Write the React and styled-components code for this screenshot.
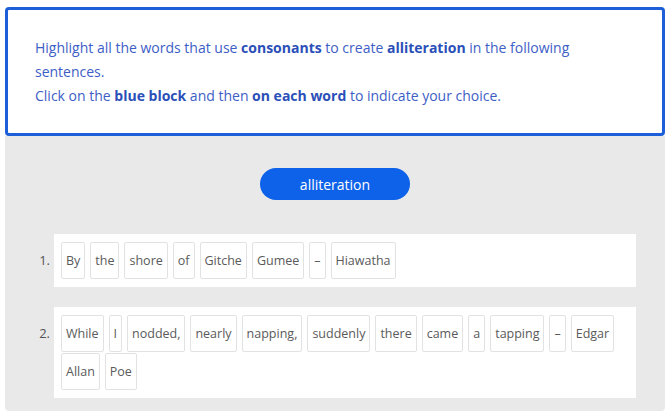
import React from "react";
import styled, { createGlobalStyle } from "styled-components";

const GlobalStyle = createGlobalStyle`
  html, body {
    margin: 0;
    padding: 0;
    background: #ffffff;
    font-family: "Open Sans", "Liberation Sans", sans-serif;
  }
`;

const Page = styled.div`
  padding: 7px 5px 0 5px;
  width: 660px;
`;

const Instructions = styled.div`
  border: 3px solid #1c5fd8;
  border-radius: 4px;
  padding: 26px 50px 25px 27px;
  font-size: 14px;
  line-height: 24px;
  color: #3d5ec6;
  background: #fff;

  b {
    font-weight: 700;
    color: #2b4fb8;
  }
`;

const Stage = styled.div`
  background: #e9e9e9;
  border-radius: 0 0 4px 4px;
  padding: 32px 29px 13px 0;
  display: flex;
  flex-direction: column;
  align-items: stretch;
`;

const TagButton = styled.button`
  align-self: center;
  margin-left: 29px;
  width: 150px;
  height: 32px;
  border: none;
  border-radius: 16px;
  background: #0e62e9;
  color: #fff;
  font-family: inherit;
  font-size: 14px;
  cursor: pointer;
`;

const List = styled.ol`
  list-style: none;
  margin: 34px 0 0 0;
  padding: 0;
  display: flex;
  flex-direction: column;
  gap: 20px;
`;

const Item = styled.li`
  display: flex;
  align-items: flex-start;
`;

const Num = styled.span`
  width: 49px;
  box-sizing: border-box;
  padding-right: 4px;
  text-align: right;
  font-size: 13px;
  color: #555;
  line-height: 53px;
`;

const Sentence = styled.div`
  flex: 1;
  background: #fff;
  padding: 8px 7px 8px 7px;
  display: flex;
  flex-wrap: wrap;
  column-gap: 5px;
  row-gap: 1px;
`;

const Word = styled.span`
  box-sizing: border-box;
  height: 37px;
  padding: 0 4px;
  border: 1px solid #e2e2e2;
  border-radius: 2px;
  display: inline-flex;
  align-items: center;
  font-size: 12.5px;
  color: #5a5a5a;
  cursor: pointer;
`;

const sentences = [
  "By the shore of Gitche Gumee – Hiawatha",
  "While I nodded, nearly napping, suddenly there came a tapping – Edgar Allan Poe",
];

export default function App() {
  return (
    <>
      <GlobalStyle />
      <Page>
        <Instructions>
          Highlight all the words that use <b>consonants</b> to create <b>alliteration</b> in the following
          sentences.
          <br />
          Click on the <b>blue block</b> and then <b>on each word</b> to indicate your choice.
        </Instructions>
        <Stage>
          <TagButton>alliteration</TagButton>
          <List>
            {sentences.map((s, i) => (
              <Item key={i}>
                <Num>{i + 1}.</Num>
                <Sentence>
                  {s.split(" ").map((w, j) => (
                    <Word key={j}>{w}</Word>
                  ))}
                </Sentence>
              </Item>
            ))}
          </List>
        </Stage>
      </Page>
    </>
  );
}
